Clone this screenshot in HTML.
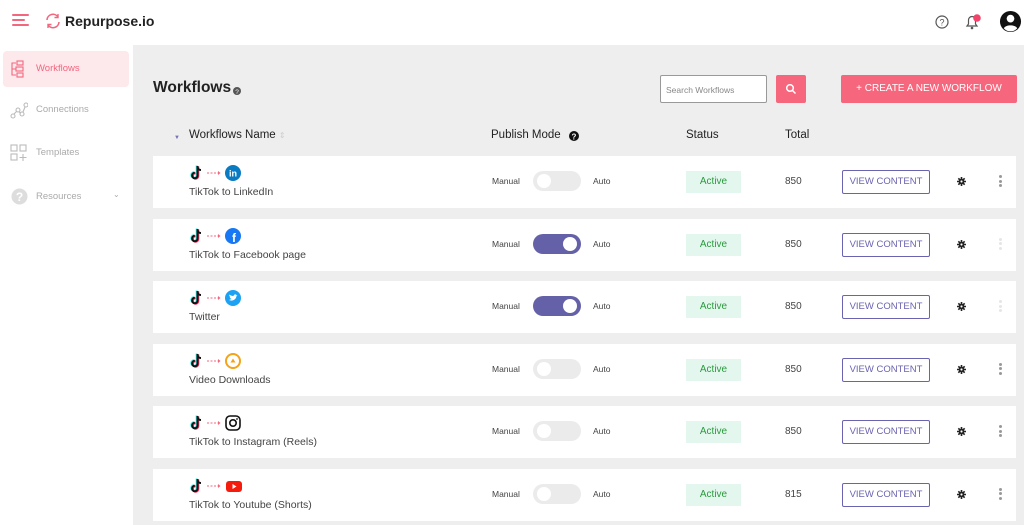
<!DOCTYPE html>
<html><head><meta charset="utf-8"><style>
*{margin:0;padding:0;box-sizing:border-box}
body{width:1024px;height:525px;overflow:hidden;background:#fff;font-family:"Liberation Sans",sans-serif;position:relative;color:#222}
.a{position:absolute}
.main{left:133px;top:45px;width:891px;height:480px;background:#eeeeee}
.row{position:absolute;left:153px;width:863px;height:52px;background:#fff}
.row .nm{position:absolute;left:36px;top:30px;font-size:10.5px;color:#444}
.row .man{position:absolute;left:339px;top:20px;font-size:8.5px;color:#444}
.row .auto{position:absolute;left:440px;top:20px;font-size:8.5px;color:#444}
.tg{position:absolute;left:380px;top:15px;width:48px;height:20px;border-radius:10px;background:#ebebeb}
.tg::after{content:"";position:absolute;left:4px;top:3px;width:14px;height:14px;border-radius:50%;background:#fff}
.tg.on{background:#6561a8}
.tg.on::after{left:30px}
.act{position:absolute;left:533px;top:15px;width:55px;height:22px;background:#e4f7ef;color:#2a9a3c;font-size:10px;text-align:center;line-height:22px}
.tot{position:absolute;left:632px;top:20px;font-size:10px;color:#444}
.vc{position:absolute;left:689px;top:14px;width:88px;height:24px;border:1.5px solid #6a63b0;border-radius:2px;color:#6a63b0;font-size:9.5px;text-align:center;line-height:21px}
.gear{position:absolute;left:804px;top:21px}
.gear svg{display:block}
.dots{position:absolute;left:846px;top:19px;width:3px}
.dots i{display:block;width:3px;height:3px;border-radius:50%;background:#999;margin-bottom:1.5px}
.dots.l i{background:#e6e6e6}
.ic{position:absolute;left:36px;top:9px;height:16px}
.side{font-size:9.5px;color:#aaa}
</style></head><body>
<div class="a" style="left:12px;top:14px">
<div style="width:17px;height:2px;background:#f2677e;margin-bottom:3px;border-radius:1px"></div>
<div style="width:13px;height:2px;background:#f2677e;margin-bottom:3px;border-radius:1px"></div>
<div style="width:17px;height:2px;background:#f2677e;border-radius:1px"></div></div>
<svg class="a" style="left:45px;top:13px" width="16" height="16" viewBox="0 0 16 16"><path d="M2 7A6 6 0 0 1 13 4M14 9A6 6 0 0 1 3 12" stroke="#f2677e" stroke-width="1.6" fill="none"/><path d="M13 1v3.5H9.5M3 15v-3.5h3.5" stroke="#f2677e" stroke-width="1.4" fill="none"/></svg>
<div class="a" style="left:65px;top:13px;font-size:14px;color:#222;font-weight:bold">Repurpose.io</div>
<svg class="a" style="left:935px;top:15px" width="14" height="14"><circle cx="7" cy="7" r="6" fill="none" stroke="#555" stroke-width="1.2"/><text x="7" y="10.5" font-size="9" text-anchor="middle" fill="#555" font-family="Liberation Sans">?</text></svg>
<svg class="a" style="left:964px;top:13px" width="18" height="17"><path d="M3 13h10l-1.5-2V7a3.5 3.5 0 0 0-7 0v4z" fill="none" stroke="#555" stroke-width="1.2"/><circle cx="8" cy="15" r="1.3" fill="#555"/><circle cx="13" cy="5" r="3.8" fill="#f2446a"/></svg>
<svg class="a" style="left:999px;top:10px" width="23" height="23" viewBox="0 0 24 24"><circle cx="12" cy="12" r="11" fill="#111"/><circle cx="12" cy="9" r="4" fill="#fff"/><path d="M5 19c2-4 12-4 14 0a9 9 0 0 1-14 0z" fill="#fff"/></svg>
<div class="a" style="left:3px;top:51px;width:126px;height:36px;background:#fde8ec;border-radius:4px"></div>
<svg class="a" style="left:10px;top:60px" width="18" height="18"><g fill="none" stroke="#f2677e" stroke-width="1.1"><rect x="7" y="1" width="6" height="4"/><rect x="6" y="7" width="7" height="4"/><rect x="7" y="13" width="6" height="4"/><path d="M6 3H2v6h4M2 9v6h4"/></g></svg>
<div class="a side" style="left:36px;top:63px;color:#f2677e">Workflows</div>
<svg class="a" style="left:10px;top:101px" width="18" height="18"><g fill="none" stroke="#bbb" stroke-width="1.1"><circle cx="3" cy="15" r="2"/><circle cx="8" cy="9" r="2"/><circle cx="12" cy="13" r="2"/><circle cx="16" cy="4" r="2"/><path d="M4 13l3-3M9 11l2 1M13 11l2-5"/></g></svg>
<div class="a side" style="left:36px;top:104px">Connections</div>
<svg class="a" style="left:10px;top:144px" width="18" height="18"><g fill="none" stroke="#bbb" stroke-width="1.1"><rect x="1" y="1" width="6" height="6"/><rect x="10" y="1" width="6" height="6"/><rect x="1" y="10" width="6" height="6"/><path d="M13 10v7M9.5 13.5h7"/></g></svg>
<div class="a side" style="left:36px;top:147px">Templates</div>
<svg class="a" style="left:11px;top:188px" width="17" height="17"><circle cx="8.5" cy="8.5" r="8" fill="#ddd"/><text x="8.5" y="13" font-size="12" font-weight="bold" text-anchor="middle" fill="#fff" font-family="Liberation Sans">?</text></svg>
<div class="a side" style="left:36px;top:191px">Resources</div>
<div class="a side" style="left:113px;top:190px;font-size:8px">⌄</div>
<div class="a main"></div>
<div class="a" style="left:153px;top:79px;font-size:15.5px;font-weight:bold;color:#222">Workflows</div>
<svg class="a" style="left:233px;top:87px" width="8" height="8"><circle cx="4" cy="4" r="4" fill="#555"/><text x="4" y="7" font-size="6.5" text-anchor="middle" fill="#fff" font-family="Liberation Sans">?</text></svg>
<div class="a" style="left:660px;top:75px;width:107px;height:28px;background:#fff;border:1px solid #999;border-radius:2px;font-size:8.5px;color:#888;padding:9px 0 0 5px">Search Workflows</div>
<div class="a" style="left:776px;top:75px;width:30px;height:28px;background:#f6677e;border-radius:2px"></div>
<svg class="a" style="left:785px;top:83px" width="12" height="12"><circle cx="5" cy="5" r="3.3" fill="none" stroke="#fff" stroke-width="1.5"/><path d="M7.5 7.5l3 3" stroke="#fff" stroke-width="1.5"/></svg>
<div class="a" style="left:841px;top:75px;width:176px;height:28px;background:#f6677e;border-radius:2px;color:#fff;font-size:10px;text-align:center;line-height:28px">+ CREATE A NEW WORKFLOW</div>
<div class="a" style="left:174px;top:135px;font-size:6px;color:#7771b5">▼</div>
<div class="a" style="left:189px;top:129px;font-size:11.5px">Workflows Name <span style="color:#ccc;font-size:8px">⇕</span></div>
<div class="a" style="left:491px;top:129px;font-size:11.5px">Publish Mode</div>
<svg class="a" style="left:569px;top:131px" width="10" height="10"><circle cx="5" cy="5" r="5" fill="#111"/><text x="5" y="8.3" font-size="8" font-weight="bold" text-anchor="middle" fill="#fff" font-family="Liberation Sans">?</text></svg>
<div class="a" style="left:686px;top:129px;font-size:11.5px">Status</div>
<div class="a" style="left:785px;top:129px;font-size:11.5px">Total</div>
<div id="rows"></div>
<script>
const tk='<svg width="14" height="16" viewBox="0 0 14 16"><path d="M8.5 1v9.5a2.7 2.7 0 1 1-2.7-2.7" fill="none" stroke="#25f4ee" stroke-width="2" transform="translate(-0.8,-0.5)"/><path d="M8.5 1v9.5a2.7 2.7 0 1 1-2.7-2.7" fill="none" stroke="#fe2c55" stroke-width="2" transform="translate(0.8,0.5)"/><path d="M8.5 1v9.5a2.7 2.7 0 1 1-2.7-2.7M8.5 1.5c0 2 1.5 3.5 3.5 3.5" fill="none" stroke="#111" stroke-width="2"/></svg>';
const ar='<svg width="18" height="16"><path d="M2 8h12" stroke="#f2677e" stroke-width="1" stroke-dasharray="2 1.5"/><path d="M13 6l2.5 2-2.5 2z" fill="#f2677e"/></svg>';
const ic={
li:'<svg width="16" height="16"><circle cx="8" cy="8" r="8" fill="#0a7bc2"/><text x="8" y="11.5" font-size="9" font-weight="bold" text-anchor="middle" fill="#fff" font-family="Liberation Sans">in</text></svg>',
fb:'<svg width="16" height="16"><circle cx="8" cy="8" r="8" fill="#1877f2"/><text x="9" y="14" font-size="12" font-weight="bold" text-anchor="middle" fill="#fff" font-family="Liberation Sans">f</text></svg>',
tw:'<svg width="16" height="16"><circle cx="8" cy="8" r="8" fill="#1da1f2"/><path d="M4 10c3 1.5 7 0 7.5-4l1-1-1 .2C11 4 9 4 8.5 6 6.5 6 5 5 4.5 4.5c-.5 1 0 2 .8 2.5H4.8c0 1 1 1.6 1.6 1.8-.7.7-1.5 1-2.4 1.2z" fill="#fff"/></svg>',
vd:'<svg width="16" height="16"><circle cx="8" cy="8" r="7" fill="none" stroke="#f3a417" stroke-width="2"/><path d="M8 5.5l2.5 4h-5z" fill="#f3a417"/></svg>',
ig:'<svg width="16" height="16"><rect x="1" y="1" width="14" height="14" rx="4" fill="none" stroke="#111" stroke-width="1.6"/><circle cx="8" cy="8" r="3.2" fill="none" stroke="#111" stroke-width="1.6"/><circle cx="12" cy="4" r=".9" fill="#111"/></svg>',
yt:'<svg width="18" height="16"><rect x="1" y="3" width="16" height="11" rx="3" fill="#f61c0d"/><path d="M7.5 6v5l4-2.5z" fill="#fff"/></svg>'};
const gear='<svg width="9" height="9" viewBox="0 0 10 10"><circle cx="5" cy="5" r="3.2" fill="#222"/><g stroke="#222" stroke-width="1.8"><path d="M5 0v10M0 5h10M1.5 1.5l7 7M8.5 1.5l-7 7"/></g><circle cx="5" cy="5" r="1.2" fill="#fff"/></svg>';
const data=[['li','TikTok to LinkedIn',0,'850',0],['fb','TikTok to Facebook page',1,'850',1],['tw','Twitter',1,'850',1],['vd','Video Downloads',0,'850',0],['ig','TikTok to Instagram (Reels)',0,'850',0],['yt','TikTok to Youtube (Shorts)',0,'815',0]];
let h='';
data.forEach((d,i)=>{const t=156+i*62.5;
h+=`<div class="row" style="top:${t}px"><div class="ic" style="display:flex;gap:2px;align-items:center">${tk}${ar}${ic[d[0]]}</div><div class="nm">${d[1]}</div><div class="man">Manual</div><div class="tg${d[2]?' on':''}"></div><div class="auto">Auto</div><div class="act">Active</div><div class="tot">${d[3]}</div><div class="vc">VIEW CONTENT</div><div class="gear">${gear}</div><div class="dots${d[4]?' l':''}"><i></i><i></i><i></i></div></div>`;});
document.getElementById('rows').innerHTML=h;
</script>
</body></html>
